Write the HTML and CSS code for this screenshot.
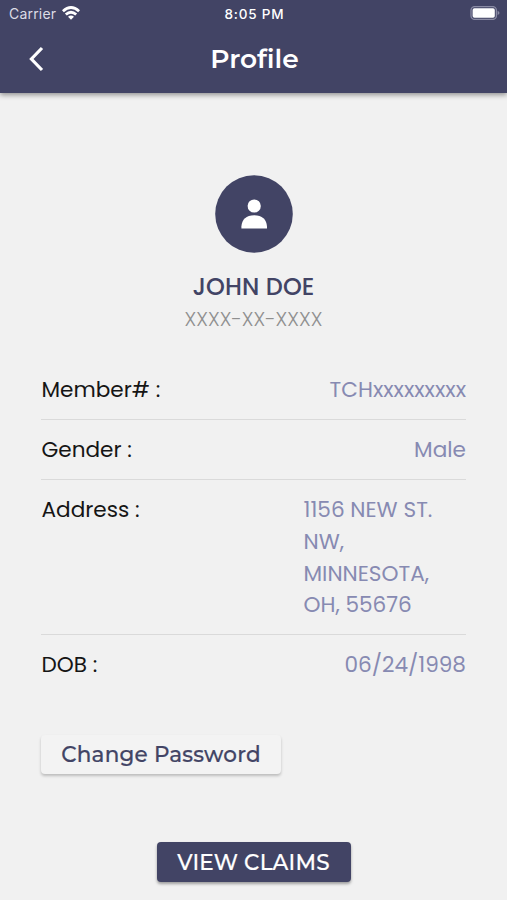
FILE: index.html
```html
<!DOCTYPE html>
<html lang="en">
<head>
<meta charset="utf-8">
<title>Profile</title>
<link rel="stylesheet" href="styles.css">
</head>
<body>
<header class="header">
  <div class="status">
    <div class="carrier"><span>Carrier</span>
      <svg class="wifi" viewBox="0 0 18 14" width="18" height="14" fill="none" stroke="#fff" stroke-width="2.8"><path d="M.9 5.2Q9-2.2 17.1 5.2"/><path d="M3.8 8.5Q9 3.9 14.2 8.5"/><path d="M9 13.7 6 10.7Q9 8.1 12 10.7Z" fill="#fff" stroke="none"/></svg>
    </div>
    <span class="time">8:05 PM</span>
    <svg class="battery" viewBox="0 0 30 14" width="30" height="14"><rect x="1" y=".6" width="25.4" height="12.8" rx="3.6" fill="none" stroke="#8a8ba4" stroke-width="1.3"/><rect x="2.6" y="2.3" width="22.2" height="9.4" rx="1.8" fill="#fff"/><path d="M27.6 4.8Q31.4 7 27.6 9.2Z" fill="#8a8ba4"/></svg>
  </div>
  <div class="nav">
    <svg class="back" viewBox="0 0 16 26" width="16" height="26" fill="none" stroke="#fff" stroke-width="3.2"><path d="M14 2 3.4 13 14 24"/></svg>
    <h1 class="title">Profile</h1>
  </div>
</header>
<main class="main">
  <svg class="avatar" viewBox="0 0 78 78" width="78" height="78"><circle cx="39" cy="39" r="38.8" fill="#424465"/><circle cx="39.2" cy="31" r="6.6" fill="#fff"/><path d="M26.4 53.6V51.5Q27.2 40.4 39.2 40.2Q51.2 40.4 52 51.5V53.6Z" fill="#fff"/></svg>
  <h2 class="name">JOHN DOE</h2>
  <p class="ssn">XXXX-XX-XXXX</p>
  <dl class="details">
    <div class="row"><dt>Member# :</dt><dd>TCHxxxxxxxxx</dd></div>
    <div class="row"><dt>Gender :</dt><dd>Male</dd></div>
    <div class="row"><dt>Address :</dt><dd class="address">1156 NEW ST.<br>NW,<br>MINNESOTA,<br>OH, 55676</dd></div>
    <div class="row"><dt>DOB :</dt><dd>06/24/1998</dd></div>
  </dl>
  <button class="button change">Change Password</button>
  <button class="button claims">VIEW CLAIMS</button>
</main>
</body>
</html>
```
FILE: styles.css
```css
* { box-sizing: border-box; }
body { margin: 0; width: 507px; height: 900px; overflow: hidden; background: #f1f1f1; font-family: Poppins, Inter, sans-serif; }
h1, h2, p, dl, dd { margin: 0; }
svg { display: block; flex: none; }
.header { height: 93px; background: #424465; color: #fff; box-shadow: 0 2px 5px rgba(0,0,0,.4); }
.status { height: 28px; padding: 0 7px 0 9px; display: grid; grid-template-columns: 1fr auto 1fr; align-items: center; font-family: Inter, sans-serif; font-size: 14px; }
.carrier { display: flex; align-items: center; gap: 6px; color: #dcdce5; letter-spacing: .2px; }
.carrier span { margin-top: -1px; }
.wifi { margin-top: -2px; }
.time { margin-top: -1px; font-size: 13.5px; font-weight: 550; letter-spacing: .8px; }
.battery { justify-self: end; margin-top: -2px; }
.nav { display: grid; grid-template-columns: 48px 1fr 48px; align-items: center; height: 62px; }
.back { justify-self: end; margin-right: 4px; }
.title { padding-left: 2px; text-align: center; font: 600 26.5px/36px Montserrat, Inter, sans-serif; }
.main { display: flex; flex-direction: column; align-items: center; padding: 82px 41px 0; }
.name { margin-top: 16px; font-size: 24px; line-height: 36px; font-weight: 500; color: #424465; letter-spacing: .1px; }
.ssn { font-size: 20px; line-height: 28px; font-weight: 300; color: #8f8f8f; }
.details { width: 425px; margin-top: 26px; font-size: 21.6px; line-height: 32px; }
.row { display: flex; justify-content: space-between; padding: 14px 0 13px; border-bottom: 1px solid #dadada; white-space: nowrap; }
.row:first-child { padding-top: 15px; }
.row:last-child { border: 0; }
dt { padding-left: .5px; color: #151515; }
dd { color: #878ab2; font-weight: 400; }
.address { width: 162.5px; line-height: 31.8px; }
.button { border: 0; border-radius: 4px; height: 40px; padding: 0; font: 500 21.5px/40px Montserrat, Inter, sans-serif; letter-spacing: .2px; white-space: nowrap; -webkit-text-stroke: .2px; }
.change { width: 240px; height: 39px; align-self: flex-start; margin: 41px 0 1px; line-height: 37px; background: #f3f3f3; color: #424465; box-shadow: 0 2px 3px rgba(0,0,0,.22); }
.claims { width: 194px; margin-top: 67px; background: #424465; color: #fff; box-shadow: 0 2px 3px rgba(0,0,0,.35); }
```
